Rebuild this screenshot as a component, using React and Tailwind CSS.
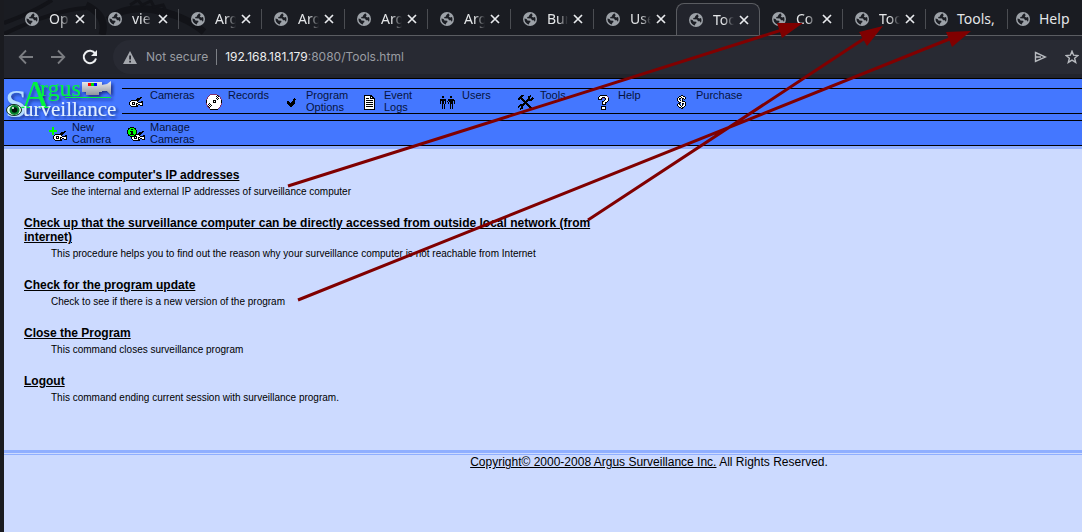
const TABS = [
  { label: "Op" },
  { label: "vie" },
  { label: "Arg" },
  { label: "Arg" },
  { label: "Arg" },
  { label: "Arg" },
  { label: "Bur" },
  { label: "Use" },
  { label: "Too", active: true },
  { label: "Co" },
  { label: "Too" },
  { label: "Tools,", wide: true },
  { label: "Help", wide: true },
];

const PIXEL_COLORS = { k: "#000000", w: "#ffffff", g: "#00ff00", p: "#803070" };

const CAMERA = [
  "...........kk.",
  "........kkkk..",
  ".......kkkk...",
  "..kkkkkkkk....",
  ".kwwwwwwk...kk",
  "kwwkkkwwwkkkkk",
  "kwwkwkwkkwwwwk",
  "kwwkkkwkwkkwwk",
  ".kwwwwwkk..kkk",
  "..kkkkkkk.....",
];

const DISC = [
  "....ppppppp.....",
  "...pwwwwwwwkp...",
  "..pwwwwwwwkwkp..",
  ".pwwwwwwwwwkwwp.",
  ".pwwwwwwwwkwkwp.",
  "pwwwwwwwwwwkwwwp",
  "kwwwwwwkkkwwwwwk",
  "kwwwwwwkwkwwwwwk",
  "kwwwwwwkkkwwwwwk",
  "pwwkwwwwwwwwwwwp",
  "pwkwkwwwwwwwwwwp",
  ".pwkwkwwwwwwwwp.",
  ".pkwkwwwwwwwwwp.",
  "..pkwwwwwwwwwp..",
  "...pwwwwwwwwp...",
  "....kkkkkkkk....",
];

const CHECK = [
  ".......k..",
  "......kkk.",
  "......kk..",
  "kk...kkk..",
  "kkk.kkkk..",
  "kkkkkkkk..",
  ".kkkkkk...",
  "..kkkk....",
  "...kk.....",
];

const PAGE = [
  "kkkkkkkk....",
  "kwwwwwkkk...",
  "kwwwwwkwkk..",
  "kwkkkwkkkkk.",
  "kwwwwwwwwwk.",
  "kwkkkkkkkwk.",
  "kwwwwwwwwwk.",
  "kwkkkkkkkwk.",
  "kwwwwwwwwwk.",
  "kwkkkkkkkwk.",
  "kwwwwwwwwwk.",
  "kwkkkkkkkwk.",
  "kwwwwwwwwwk.",
  "kwwwwwwwwwk.",
  "kkkkkkkkkkk.",
];

const USERS = [
  "..kk......kk....",
  "..kk......kk....",
  "................",
  "kkkkkk..kkkkkk..",
  "kkkkkk..kkkkkkk.",
  "k.kk.k.k.kkkk.k.",
  "k.kk.k..k.kkk.k.",
  "k.kk.k..k.kkk.k.",
  "..k.k.....k.k...",
  "..k.k.....k.k...",
  "..k.k.....k.k...",
  "..k.k.....k.k...",
  "..k.k.....k.k...",
];

const TOOLS = [
  "...kkk......k...",
  "..kkk.....kkk...",
  ".kkk......kk..k.",
  "kkkkk.....kk.kkk",
  "kk.kkk...kkkkkk.",
  "....kkk.kkkkkk..",
  ".....kkkkk......",
  "......kkk.......",
  ".....kkkkk......",
  "..kkkkk.kkk.....",
  ".kkkkk...kkk....",
  "kk.kk.....kkk...",
  "k..kk......kkk..",
  "..kkk.......kkk.",
  "..k..........kk.",
];

const QUESTION = [
  "..kkkkkkk...",
  ".kwwwwwwwp..",
  "kwwwkkkwwwp.",
  "kwwkp.pkwwk.",
  "kkkk...kwwk.",
  "......kwwwk.",
  "....kkwwwk..",
  "....kwwkk...",
  "....kwwk....",
  "....kkkk....",
  "............",
  "...kkkkk....",
  "...kwwwk....",
  "...kwwwk....",
  "...kkkkk....",
];

const DOLLAR = [
  "....kk....",
  "..kkwwkk..",
  ".kwwkwwwk.",
  "kwkkwkkwk.",
  "kwk.wk.k..",
  "kwwkwk....",
  ".kwwwkkk..",
  "..kkwwwwk.",
  ".kk.wkkwk.",
  "kwk.wk.wk.",
  "kwwkwkwwk.",
  ".kwwkwwk..",
  "..kkwkk...",
  "....kk....",
];

const NEW_CAMERA = [
  "...gg.............",
  "...gg.............",
  "...gg.............",
  "gggggggg..........",
  "gggggggg.......kk.",
  "...gg.......kkkk..",
  "...gg......kkkk...",
  "...gg.kkkkkkkk....",
  ".....kwwwwwwk...kk",
  "....kwwkkkwwwkkkkk",
  "....kwwkwkwkkwwwwk",
  "....kwwkkkwkwkkwwk",
  ".....kwwwwwkk..kkk",
  "......kkkkkkk.....",
];

const MANAGE = [
  "...kkkk...........",
  ".kkggggkk.........",
  ".kggkkggk.........",
  "kggggggggk........",
  "kggkkkgggk.....kk.",
  "kgggkkgggk..kkkk..",
  "kgggkkgggk.kkkk...",
  ".kgkkkkgkkkkkk....",
  ".kkggggkkwwwk...kk",
  "...kkkkkkkwwwkkkkk",
  "....kwwkwkwkkwwwwk",
  "....kwwkkkwkwkkwwk",
  ".....kwwwwwkk..kkk",
  "......kkkkkkk.....",
];

const MENU = [
  { label: "Cameras", art: CAMERA },
  { label: "Records", art: DISC },
  { label: "Program Options", art: CHECK },
  { label: "Event Logs", art: PAGE },
  { label: "Users", art: USERS },
  { label: "Tools", art: TOOLS },
  { label: "Help", art: QUESTION },
  { label: "Purchase", art: DOLLAR },
];

const SUBMENU = [
  { label: "New Camera", art: NEW_CAMERA },
  { label: "Manage Cameras", art: MANAGE },
];

const SECTIONS = [
  {
    title: "Surveillance computer's IP addresses",
    text: "See the internal and external IP addresses of surveillance computer",
  },
  {
    title:
      "Check up that the surveillance computer can be directly accessed from outside local network (from internet)",
    text: "This procedure helps you to find out the reason why your surveillance computer is not reachable from Internet",
  },
  {
    title: "Check for the program update",
    text: "Check to see if there is a new version of the program",
  },
  { title: "Close the Program", text: "This command closes surveillance program" },
  { title: "Logout", text: "This command ending current session with surveillance program." },
];

function PixelIcon({ art }) {
  return (
    <svg width={art[0].length} height={art.length} shapeRendering="crispEdges" aria-hidden="true">
      {art.flatMap((row, y) =>
        [...row].map((c, x) =>
          c === "." ? null : <rect key={x + "-" + y} x={x} y={y} width="1" height="1" fill={PIXEL_COLORS[c]} />
        )
      )}
    </svg>
  );
}

function Globe() {
  return (
    <svg className="shrink-0" width="14" height="14" viewBox="0 0 14 14" aria-hidden="true">
      <circle cx="7" cy="7" r="7" fill="#9da2a8" />
      <path
        d="M8 1.6 6.2 3.2 6 4.6 4.3 5 4.2 6.3 8 6.4 9 8.2 10.8 8.3 11.8 9.8C12.6 8.6 12.7 6.5 12 5L10.2 5.4 8.7 4.4 9.6 3.4 9 1.7ZM1.5 6.4 1.6 8.3C2 10.4 3.8 12.3 6 12.5L6.2 11 7.5 10 7.2 8.7 4.5 8.5 3.5 7Z"
        fill="#1c1e24"
      />
    </svg>
  );
}

function Tab({ tab }) {
  if (tab.wide) {
    return (
      <div className="flex h-5 w-[82px] shrink-0 items-center gap-[9px] border-r border-[#4b4d52] pl-2">
        <Globe />
        <span className="whitespace-nowrap">{tab.label}</span>
      </div>
    );
  }
  return (
    <div
      className={
        tab.active
          ? "z-10 -ml-px flex h-8 w-[84px] shrink-0 items-center rounded-t-lg border border-b-0 border-[#5a5c61] bg-[#22242c] pl-3"
          : "flex h-5 w-[83px] shrink-0 items-center border-r border-[#4b4d52] pl-3"
      }
    >
      <Globe />
      <span className="ml-[10px] w-[21px] overflow-hidden whitespace-nowrap [mask-image:linear-gradient(to_right,black_50%,transparent)]">
        {tab.label}
      </span>
      <button type="button" aria-label={"Close " + tab.label} className="ml-[5px]">
        <svg width="10" height="10" viewBox="0 0 10 10" stroke="#e8eaed" strokeWidth="1.7">
          <path d="M1 1l8 8M9 1l-8 8" />
        </svg>
      </button>
    </div>
  );
}

function TabBar() {
  return (
    <div className="relative flex h-9 items-center overflow-hidden border-b border-[#5a5c61] bg-[#1a1c22] pl-[9px] pt-[3px] text-[14px] leading-5 text-[#e4e6e8]">
      <svg className="absolute left-0 top-0" width="220" height="35" fill="none" stroke="#121318" aria-hidden="true">
        <path d="M0 23 Q30 12 48 0M0 34 Q50 10 82 8" strokeWidth="4" />
        <path d="M82 5 Q104 16 98 35M104 20Q120 5 150 10T200 32" strokeWidth="7" />
        <path d="M126 5l8-5 4 5 9-4 3 6 9-2 4 8 8 0" strokeWidth="3" />
      </svg>
      <div className="relative flex items-center">
        {TABS.map((tab, i) => (
          <Tab key={i} tab={tab} />
        ))}
      </div>
    </div>
  );
}

function Toolbar() {
  return (
    <div className="flex h-[43px] items-center border-b border-black bg-[#22242c] pl-[14px] text-[13px] leading-5 text-[#9a9da3]">
      <button type="button" aria-label="Back">
        <svg width="16" height="16" fill="none" stroke="#7b7d82" strokeWidth="1.8">
          <path d="M15 8H2M8 1.5 1.7 8 8 14.5" />
        </svg>
      </button>
      <button type="button" aria-label="Forward" className="ml-4">
        <svg width="16" height="16" fill="none" stroke="#7b7d82" strokeWidth="1.8">
          <path d="M1 8h13M8 1.5 14.3 8 8 14.5" />
        </svg>
      </button>
      <button type="button" aria-label="Reload" className="ml-4">
        <svg width="16" height="16" fill="none" stroke="#eceef0" strokeWidth="2">
          <path d="M13.2 4.6A6.2 6.2 0 1 0 14 9.5" />
          <path d="M15 1v6H9z" fill="#eceef0" stroke="none" />
        </svg>
      </button>
      <div className="ml-[15px] flex h-[34px] flex-1 items-center rounded-l-full bg-[#282a33] pl-[10px] font-['Inter','Noto_Sans',sans-serif] text-xs">
        <svg width="14" height="13" aria-hidden="true">
          <path d="M7 0 14 13H0z" fill="#a4a7ad" />
          <path d="M6.2 4.5h1.8v4H6.2zM6.2 9.7h1.8v1.7H6.2z" fill="#282a33" />
        </svg>
        <span className="ml-[9px]">Not secure</span>
        <span className="mx-2 h-4 w-px bg-[#7d8086]" />
        <span className="flex-1">
          <span className="text-[#eceef0]">192.168.181.179</span>:8080/Tools.html
        </span>
        <button type="button" aria-label="Send">
          <svg width="13" height="12" fill="none" stroke="#b8bbc0" strokeWidth="1.4">
            <path d="M1.5 1.5 11.5 6 1.5 10.5zM1.5 6H7" />
          </svg>
        </button>
        <button type="button" aria-label="Bookmark" className="ml-[18px] mr-[3px]">
          <svg width="14" height="14" viewBox="0 0 14 14" fill="none" stroke="#b8bbc0" strokeWidth="1.4">
            <path d="M7 1.2 8.6 5.2 12.9 5.5 9.6 8.2 10.7 12.4 7 10.1 3.3 12.4 4.4 8.2 1.1 5.5 5.4 5.2z" />
          </svg>
        </button>
      </div>
    </div>
  );
}

function Logo() {
  return (
    <svg width="118" height="41" viewBox="0 0 118 41" role="img" aria-label="Argus Surveillance">
      <defs>
        <filter id="shadow" x="-10%" y="-10%" width="130%" height="140%">
          <feDropShadow dx="2" dy="2" stdDeviation="1.5" floodColor="#0a1f66" floodOpacity="0.75" />
        </filter>
        <linearGradient id="body" x1="0" y1="0" x2="0" y2="1">
          <stop offset="0" stopColor="#eeeeee" />
          <stop offset="1" stopColor="#8e949e" />
        </linearGradient>
      </defs>
      <g filter="url(#shadow)" fontFamily="'Liberation Serif', serif">
        <text x="1" y="38" fontSize="40" fill="#b5dcff">S</text>
        <text x="17" y="29" fontSize="40" fill="#00f53d">
          A<tspan x="36" y="17" fontSize="24">rgus</tspan>
        </text>
        <path d="M61 18.5h46" stroke="#00f53d" />
        <text x="19" y="37" fontSize="21" fill="#e3f1ff">urveillance</text>
        <path d="M78 3h20v10H78zM98 6l5-1 4-3v14l-4-4-5 0zM82 13h13v3H82z" fill="url(#body)" />
        <path d="M84 4h3v3h-3z" fill="#f00" />
        <path d="M87 4h3v3h-3z" fill="#0d0" />
        <path d="M90 4h3v3h-3z" fill="#00f" />
      </g>
      <ellipse cx="10" cy="31" rx="7.5" ry="5.5" fill="#e8fff0" stroke="#10301c" />
      <circle cx="10.500" cy="31" r="5" fill="#07852f" />
      <circle cx="10.500" cy="31" r="2.8" fill="#001408" />
      <circle cx="9" cy="29" r="1" fill="#fff" />
    </svg>
  );
}

function MenuItem({ item }) {
  return (
    <a href="#" className="flex w-[78px] text-[11px] leading-3 text-[#06133d]">
      <span className="flex w-7 shrink-0 items-center justify-center pr-px pt-[2px]">
        <PixelIcon art={item.art} />
      </span>
      <span className="w-[50px]">{item.label}</span>
    </a>
  );
}

function Arrows() {
  return (
    <svg
      className="pointer-events-none absolute -left-1 top-0 z-20"
      width="1082"
      height="532"
      stroke="#800000"
      strokeWidth="3"
      aria-hidden="true"
    >
      <path d="M288 186 785 29M588 220 865 38M298 300 952 38" />
      <path d="M803 23 777 23 782 38zM883 26 859 32 867 46zM971 31 946 32 952 47z" fill="#800000" stroke="none" />
    </svg>
  );
}

export default function App() {
  return (
    <div className="relative min-h-screen border-l-4 border-[#1a1b20] bg-[#ccdaff] font-['Liberation_Sans',Arial,sans-serif] text-black">
      <header className="font-['Noto_Sans',sans-serif]">
        <TabBar />
        <Toolbar />
      </header>
      <nav className="border-b-[3px] border-[#90afff] bg-[#4477ff]">
        <div className="flex h-[41px] items-center">
          <Logo />
          <div className="mt-[3px] flex h-[26px] flex-1 border-y border-black">
            {MENU.map((item) => (
              <MenuItem key={item.label} item={item} />
            ))}
          </div>
        </div>
        <div className="flex h-[26px] border-y border-black pl-10">
          {SUBMENU.map((item) => (
            <MenuItem key={item.label} item={item} />
          ))}
        </div>
      </nav>
      <main className="flex flex-col gap-[14px] px-5 pb-[42px] pt-[19px]">
        {SECTIONS.map((s) => (
          <section key={s.title} className="max-w-[580px]">
            <h2 className="text-xs leading-[14px] font-bold">
              <a href="#" className="underline">
                {s.title}
              </a>
            </h2>
            <p className="pl-[27px] text-[10px] leading-5">{s.text}</p>
          </section>
        ))}
      </main>
      <footer>
        <div className="h-[5px] border-b border-t-[3px] border-[#90afff]" />
        <p className="pl-[212px] text-center text-xs leading-[14px]">
          <a href="#" className="underline">
            Copyright© 2000-2008 Argus Surveillance Inc.
          </a>{" "}
          All Rights Reserved.
        </p>
      </footer>
      <Arrows />
    </div>
  );
}
